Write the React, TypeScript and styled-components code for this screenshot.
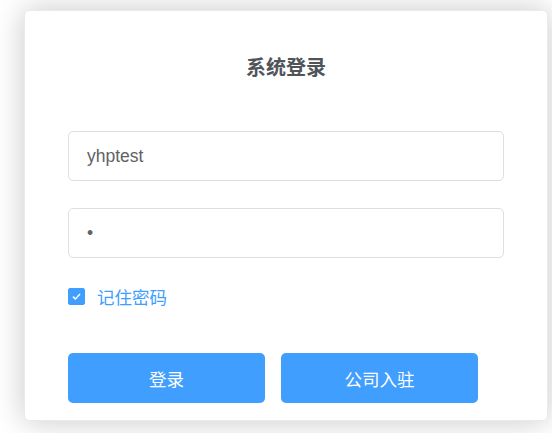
import React, { useState } from "react";
import styled, { createGlobalStyle } from "styled-components";

const GlobalStyle = createGlobalStyle`
  html, body {
    margin: 0;
    padding: 0;
    background: #ffffff;
  }
  body {
    font-family: "Liberation Sans", "Noto Sans CJK SC", sans-serif;
  }
  * { box-sizing: border-box; }
`;

const Page = styled.div`
  width: 552px;
  height: 433px;
  padding: 10px 0 0 24px;
  overflow: hidden;
`;

const Card = styled.form`
  width: 524px;
  height: 411px;
  background: #fff;
  border: 1px solid #eaeaea;
  border-radius: 5px;
  box-shadow: 0 0 31px #cac6c6;
  padding: 43px 43px 17px;
  display: flex;
  flex-direction: column;
`;

const Title = styled.h3`
  margin: 0 0 51px;
  height: 26px;
  line-height: 26px;
  text-align: center;
  font-size: 20px;
  font-weight: bold;
  color: #505458;
  font-family: "Noto Sans CJK SC", sans-serif;
`;

const Field = styled.div`
  margin-bottom: 27px;
`;

const Input = styled.input`
  display: block;
  width: 100%;
  height: 50px;
  border: 1px solid #dcdfe6;
  border-radius: 5px;
  padding: 0 18px;
  font-size: 17.5px;
  color: #606266;
  font-family: "Liberation Sans", "Noto Sans CJK SC", sans-serif;
  outline: none;
  background: #fff;
`;

const CheckRow = styled.label`
  display: flex;
  align-items: center;
  height: 22px;
  gap: 12px;
  color: #409eff;
  font-size: 17.5px;
  font-family: "Noto Sans CJK SC", sans-serif;
  cursor: pointer;
  margin-bottom: 46px;
`;

const Box = styled.span<{ $checked: boolean }>`
  width: 17px;
  height: 17px;
  border-radius: 2px;
  border: 1px solid ${(p) => (p.$checked ? "#409eff" : "#dcdfe6")};
  background: ${(p) => (p.$checked ? "#409eff" : "#fff")};
  display: flex;
  align-items: center;
  justify-content: center;
`;

const Buttons = styled.div`
  display: flex;
  gap: 16px;
`;

const Button = styled.button`
  width: 197px;
  height: 50px;
  border: none;
  border-radius: 5px;
  background: #409eff;
  color: #fff;
  font-size: 17.5px;
  font-family: "Noto Sans CJK SC", sans-serif;
  cursor: pointer;
`;

export default function App() {
  const [checked, setChecked] = useState(true);
  return (
    <>
      <GlobalStyle />
      <Page>
        <Card onSubmit={(e) => e.preventDefault()}>
          <Title>系统登录</Title>
          <Field>
            <Input type="text" defaultValue="yhptest" />
          </Field>
          <Field>
            <Input type="password" defaultValue="1" />
          </Field>
          <CheckRow onClick={() => setChecked(!checked)}>
            <Box $checked={checked}>
              {checked && (
                <svg width="11" height="11" viewBox="0 0 11 11">
                  <path d="M2 5.6 L4.4 8 L9 3" stroke="#fff" strokeWidth="1.5" fill="none" />
                </svg>
              )}
            </Box>
            记住密码
          </CheckRow>
          <Buttons>
            <Button type="button">登录</Button>
            <Button type="button">公司入驻</Button>
          </Buttons>
        </Card>
      </Page>
    </>
  );
}
